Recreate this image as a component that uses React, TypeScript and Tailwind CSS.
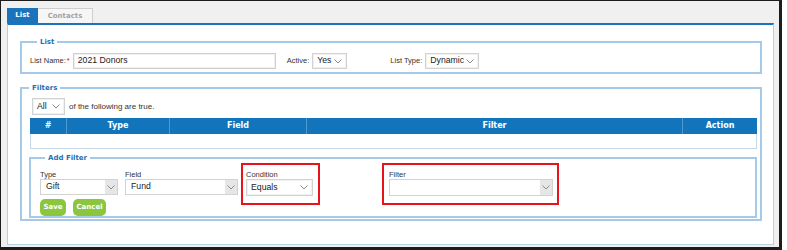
import React from 'react';

const sans = 'font-["Liberation_Sans",Arial,sans-serif]';
const bold = 'font-["DejaVu_Sans",Verdana,sans-serif] font-bold';

function Chevron() {
   return (
      <svg width="8" height="5" viewBox="0 0 8 5" className="shrink-0">
         <polyline points="0.5,0.5 4,4 7.5,0.5" fill="none" stroke="#8c8c8c" strokeWidth="1" />
      </svg>
   );
}

function Select({ value, className }: { value: string; className: string }) {
   return (
      <div
         className={`flex items-center justify-between border border-[#d2d2d2] bg-white pl-[4px] pr-[4px] shadow-[inset_0_0_0_1px_#f1f1f1] text-[8.7px] text-[#222] ${className}`}
      >
         <span>{value}</span>
         <Chevron />
      </div>
   );
}

function ButtonSelect({ value, className }: { value: string; className: string }) {
   return (
      <div className={`flex items-stretch border border-[#d2d2d2] bg-white text-[8.7px] text-[#222] ${className}`}>
         <span className="flex flex-1 items-center pl-[5px]">{value}</span>
         <span className="flex w-[12px] items-center justify-center bg-[#e6e6e6]">
            <Chevron />
         </span>
      </div>
   );
}

function Legend({ children, className }: { children: React.ReactNode; className: string }) {
   return <legend className={`${bold} px-[3px] text-[7px] leading-[10px] text-[#1f70b4] ${className}`}>{children}</legend>;
}

const columns = [
   { label: '#' },
   { label: 'Type' },
   { label: 'Field' },
   { label: 'Filter' },
   { label: 'Action' },
];

export default function App() {
   return (
      <div className={`h-[250px] w-[787px] bg-white ${sans}`}>
         <div className="flex h-[250px] w-[782px] flex-col border-t border-l border-r-[3px] border-b-[3px] border-[#1c1c1c] bg-[#f0f0f0] pt-[7px] pl-[6px] pr-[5px] pb-[2px]">
            {/* tabs */}
            <div className="flex h-[15px]">
               <div className={`${bold} flex w-[31px] items-center justify-center bg-[#1b74bb] text-[7px] text-white`}>List</div>
               <div className={`${bold} flex w-[55px] items-center justify-center border-t border-r border-[#cfcfcf] bg-[#f6f6f6] text-[7px] text-[#a3a3a3]`}>
                  Contacts
               </div>
            </div>

            <div className="flex-1 border-t-2 border-l border-r border-b border-t-[#1b74bb] border-l-[#b9cfe0] border-r-[#b9cfe0] border-b-[#b9cfe0] bg-white pt-[12px] pl-[12px]">
               {/* List */}
               <fieldset className="w-[742px] border-2 border-[#a5c9e8] pt-[6px] pb-[3px] pl-[8px]">
                  <Legend className="ml-[7px]">List</Legend>
                  <div className="flex h-[16px] items-center text-[7.5px] text-[#333]">
                     <span>List Name:</span>
                     <span className="ml-[1px] text-[#e01010]">*</span>
                     <div className="ml-[3px] flex h-[16px] w-[203px] items-center border border-[#cfcfcf] pl-[4px] text-[8.7px] text-[#222] shadow-[inset_0_0_0_1px_#f1f1f1]">
                        2021 Donors
                     </div>
                     <span className="ml-[11px]">Active:</span>
                     <Select value="Yes" className="ml-[3px] h-[16px] w-[35px]" />
                     <span className="ml-[43px]">List Type:</span>
                     <Select value="Dynamic" className="ml-[3px] h-[16px] w-[54px]" />
                  </div>
               </fieldset>

               {/* Filters */}
               <fieldset className="mt-[9px] w-[742px] border-2 border-[#a5c9e8] pt-[5px] pb-[1px]">
                  <Legend className="ml-[7px]">Filters</Legend>
                  <div className="ml-[10px] flex h-[17px] items-center text-[8px] text-[#333]">
                     <Select value="All" className="h-[17px] w-[33px]" />
                     <span className="ml-[4px]">of the following are true.</span>
                  </div>

                  <div className="mt-[3px] ml-[8px] w-[727px]">
                     <div className="grid h-[16px] grid-cols-[37px_103px_137px_376px_74px] bg-[#1275bb]">
                        {columns.map((c, i) => (
                           <div
                              key={c.label}
                              className={`${bold} flex items-center justify-center text-[8px] text-white ${i < columns.length - 1 ? 'border-r border-[#4f98d0]' : ''}`}
                           >
                              {c.label}
                           </div>
                        ))}
                     </div>
                     <div className="h-[15px] border-l border-r border-b border-[#c6d8e7]" />
                  </div>

                  {/* Add Filter */}
                  <fieldset className="mt-[4px] ml-[7px] w-[728px] border-2 border-[#a5c9e8] pt-0 pb-0 pl-[9px]">
                     <Legend className="ml-[5px]">Add Filter</Legend>
                     <div className="flex items-start text-[7.5px] text-[#333]">
                        <div className="mt-[7px] flex flex-col">
                           <div className="flex">
                              <div className="flex w-[78px] flex-col">
                                 <span className="h-[9px] leading-[9px]">Type</span>
                                 <ButtonSelect value="Gift" className="h-[16px] w-[78px]" />
                              </div>
                              <div className="ml-[7px] flex w-[113px] flex-col">
                                 <span className="h-[9px] leading-[9px]">Field</span>
                                 <ButtonSelect value="Fund" className="h-[16px] w-[113px]" />
                              </div>
                           </div>
                           <div className={`${bold} mt-[4px] flex gap-[7px] text-[7px] text-white`}>
                              <div className="flex h-[17px] w-[26px] items-center justify-center rounded-[5px] bg-[#8cc63f]">Save</div>
                              <div className="flex h-[17px] w-[33px] items-center justify-center rounded-[5px] bg-[#8cc63f]">Cancel</div>
                           </div>
                        </div>

                        <div className="ml-[3px] flex w-[79px] flex-col border-2 border-[#e8141c] pt-[5px] pb-[7px] pl-[3px]">
                           <span className="h-[9px] leading-[9px]">Condition</span>
                           <Select value="Equals" className="h-[17px] w-[67px]" />
                        </div>

                        <div className="ml-[62px] flex w-[177px] flex-col border-2 border-[#e8141c] pt-[5px] pb-[7px] pl-[5px]">
                           <span className="h-[9px] leading-[9px]">Filter</span>
                           <ButtonSelect value="" className="h-[17px] w-[164px]" />
                        </div>
                     </div>
                  </fieldset>
               </fieldset>
            </div>
         </div>
      </div>
   );
}
